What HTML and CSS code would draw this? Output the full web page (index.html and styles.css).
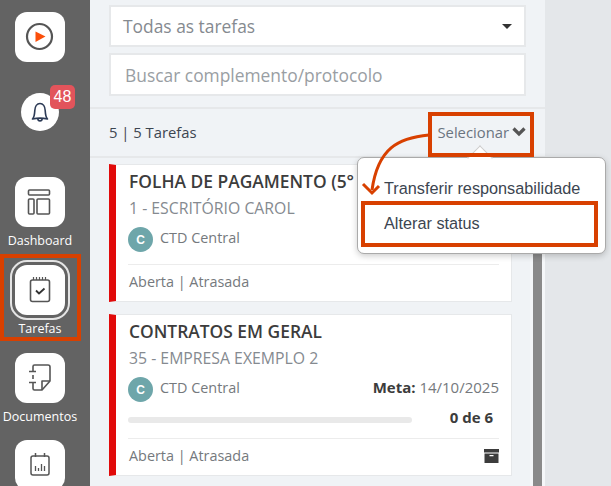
FILE: index.html
```html
<!DOCTYPE html>
<html lang="pt-BR">
<head>
  <meta charset="UTF-8" />
  <meta name="viewport" content="width=device-width, initial-scale=1.0"/>
  <title>Tarefas</title>
  <link rel="stylesheet" href="styles.css">
</head>
<body>

  <aside class="sidebar">
    <div class="tile tile-play">
      <svg width="42" height="42" viewBox="0 0 42 42" fill="none">
        <circle cx="20.5" cy="20.5" r="12.5" stroke="#555" stroke-width="2.2"/>
        <path d="M16.5 15.5 L26.5 20.5 L16.5 26 Z" fill="#fb4f0a"/>
      </svg>
    </div>

    <div class="bell">
      <svg width="24" height="24" viewBox="0 0 24 24" fill="none" stroke="#2c3a55" stroke-width="1.6" stroke-linejoin="round">
        <path d="M4.5 19 C6.5 17 6.6 14 6.8 10.5 C7 6.6 9 3.5 12 3.5 C15 3.5 17 6.6 17.2 10.5 C17.4 14 17.5 17 19.5 19 C15 18 9 18 4.5 19 Z"/>
        <path d="M9.8 18.6 C10 21.6 14 21.6 14.2 18.6"/>
      </svg>
      <span class="badge">48</span>
    </div>

    <div class="nav-item nav-dashboard">
      <div class="tile">
        <svg width="26" height="28" viewBox="0 0 26 28" fill="none" stroke="#555" stroke-width="1.6">
          <rect x="1.5" y="2" width="21" height="5" rx="1"/>
          <rect x="1.5" y="11" width="5.5" height="15" rx="1"/>
          <rect x="10" y="11" width="12.5" height="15" rx="1"/>
        </svg>
      </div>
      <span>Dashboard</span>
    </div>

    <div class="nav-item nav-active">
      <div class="ring">
        <div class="tile">
          <svg width="24" height="28" viewBox="0 0 24 28" fill="none" stroke="#555" stroke-width="1.6" stroke-linejoin="round">
            <rect x="2.5" y="4" width="19" height="21.5" rx="2"/>
            <path d="M5.5 1 V4 M8.5 1 V4 M11.5 1 V4 M14.5 1 V4 M17.5 1 V4" stroke-width="1.2"/>
            <path d="M8 14.5 L11 17.5 L16.5 12.5" stroke="#333" stroke-width="1.8"/>
          </svg>
        </div>
      </div>
      <span>Tarefas</span>
    </div>

    <div class="nav-item">
      <div class="tile">
        <svg width="26" height="30" viewBox="0 0 26 30" fill="none" stroke="#555" stroke-width="1.6" stroke-linejoin="round">
          <path d="M6 9 V3.5 Q6 2 7.5 2 H21 Q23 2 23 4 V18 L15 27 H7.5 Q6 27 6 25.5 V19"/>
          <path d="M2 8.5 H9 M2 19.5 H9 M6 12 V16"/>
          <path d="M23 18 H15 V27"/>
        </svg>
      </div>
      <span>Documentos</span>
    </div>

    <div class="nav-item">
      <div class="tile">
        <svg width="22" height="26" viewBox="0 0 22 26" fill="none" stroke="#555" stroke-width="1.5">
          <rect x="2" y="4" width="18" height="19" rx="2"/>
          <path d="M6.5 1 V5 M15.5 1 V5"/>
          <path d="M6.5 14 V19 M9.5 16 V19 M12.5 12 V19 M15.5 14 V19" stroke-width="1.3"/>
        </svg>
      </div>
    </div>
  </aside>

  <main class="content">
    <div class="filters">
      <div class="select">
        <span>Todas as tarefas</span>
        <i class="caret"></i>
      </div>
      <input class="search" type="text" placeholder="Buscar complemento/protocolo">
    </div>

    <div class="toolbar">
      <span>5 | 5 Tarefas</span>
      <span class="select-btn">Selecionar
        <svg width="14" height="10" viewBox="0 0 14 10" fill="none" stroke="#555" stroke-width="3.2"><path d="M1.5 1.5 L7 7 L12.5 1.5"/></svg>
      </span>
    </div>

    <div class="list">
      <article class="card">
        <h3>FOLHA DE PAGAMENTO (5°</h3>
        <p class="company">1 - ESCRITÓRIO CAROL</p>
        <div class="owner">
          <span class="avatar">C</span>
          <span>CTD Central</span>
        </div>
        <div class="card-foot">
          <span>Aberta | Atrasada</span>
        </div>
      </article>

      <article class="card">
        <h3>CONTRATOS EM GERAL</h3>
        <p class="company">35 - EMPRESA EXEMPLO 2</p>
        <div class="owner">
          <span class="avatar">C</span>
          <span>CTD Central</span>
          <span class="meta"><b>Meta:</b> 14/10/2025</span>
        </div>
        <div class="progress">
          <div class="bar"></div>
          <b>0 de 6</b>
        </div>
        <div class="card-foot">
          <span>Aberta | Atrasada</span>
          <svg width="15" height="14" viewBox="0 0 15 14" fill="#3c3c3c">
            <rect x="0" y="0" width="15" height="3.5"/>
            <path d="M0.5 4.5 H14.5 V14 H0.5 Z M5.5 6 V7.2 H9.5 V6 Z" fill-rule="evenodd"/>
          </svg>
        </div>
      </article>
    </div>

    <div class="scroll-track">
      <div class="scrollbar"></div>
    </div>
  </main>

  <div class="side-strip"></div>

  <div class="popover">
    <div class="popover-arrow"></div>
    <div class="popover-item">Transferir responsabilidade</div>
    <div class="popover-item popover-marked">Alterar status</div>
  </div>

  <!-- marcacoes do tutorial por cima da tela -->
  <div class="mark mark-tarefas"></div>
  <div class="mark mark-selecionar"></div>

  <svg class="arrow" width="80" height="70" viewBox="0 0 80 70" fill="none" stroke="#d84000" stroke-width="3">
    <path d="M71 7 C40 10 20 20 14 62"/>
    <path d="M5 56 L14 65 L21 58"/>
  </svg>

</body>
</html>
```

FILE: styles.css
```css
* { box-sizing: border-box; }

html, body {
  height: 486px;
}

body {
  margin: 0;
  display: flex;
  overflow: hidden;
  font-family: 'Open Sans', sans-serif;
  background: #e4e7ea;
  color: #3c3c3c;
}

.sidebar {
  width: 90px;
  flex: none;
  height: 486px;
  overflow: hidden;
  background: #636363;
  padding-top: 12px;
  display: flex;
  flex-direction: column;
  align-items: center;
  padding-right: 10px;
}

.tile {
  width: 50px;
  height: 50px;
  flex: none;
  background: white;
  border-radius: 12px;
  display: flex;
  justify-content: center;
  align-items: center;
}

.bell {
  position: relative;
  width: 38px;
  height: 38px;
  margin-top: 31px;
  margin-bottom: 46px;
  flex: none;
  border-radius: 50%;
  background: white;
  display: flex;
  justify-content: center;
  align-items: center;
}

.badge {
  position: absolute;
  top: -8px;
  left: 29px;
  width: 25px;
  height: 24px;
  border-radius: 5px;
  background: #e2545b;
  color: white;
  font-family: 'Liberation Sans', sans-serif;
  font-size: 16px;
  line-height: 24px;
  text-align: center;
}

.nav-item {
  display: flex;
  flex-direction: column;
  align-items: center;
  height: 88px;
  flex: none;
  color: white;
  font-size: 12.5px;
  line-height: 16px;
}

.nav-item span {
  margin-top: 6px;
}

.nav-active {
  margin-top: -5px;
  height: 93px;
}

.nav-active span {
  margin-top: 1px;
}

.nav-active + .nav-item {
  height: 87px;
}

.ring {
  width: 60px;
  height: 60px;
  border: 2px solid #e4e4e4;
  border-radius: 17px;
  display: flex;
  justify-content: center;
  align-items: center;
}

.content {
  position: relative;
  width: 455px;
  flex: none;
  height: 486px;
  overflow: hidden;
  background: #f0f3f6;
}

.filters {
  padding: 5px 19px 0;
  display: flex;
  flex-direction: column;
  gap: 6px;
  height: 109px;
  border-bottom: 2px solid #e6e8ea;
}

.select, .search {
  width: 417px;
  flex: none;
  background: white;
  border: 2px solid #e6e8ea;
  font-family: 'Open Sans', sans-serif;
  font-size: 17.4px;
  color: #858a90;
}

.select {
  height: 42px;
  padding: 0 12px;
  display: flex;
  justify-content: space-between;
  align-items: center;
}

.caret {
  border: 5px solid transparent;
  border-top-color: #333;
  border-bottom: none;
}

.search {
  height: 43px;
  padding: 0 14px;
  outline: none;
}

.search::placeholder {
  color: #999ea3;
  opacity: 1;
}

.toolbar {
  height: 49px;
  padding: 0 19px 2px;
  border-bottom: 2px solid #e6e8ea;
  display: flex;
  justify-content: space-between;
  align-items: center;
  font-size: 14.8px;
  color: #3c4550;
}

.select-btn {
  color: #6b7580;
  display: flex;
  align-items: center;
  gap: 3px;
}

.list {
  padding: 6px 0 0 19px;
  display: flex;
  flex-direction: column;
  gap: 12px;
}

.card {
  width: 403px;
  background: white;
  border: 1px solid #e6e8ea;
  border-left: 7px solid #e10a0a;
  padding: 5px 12px 0 12px;
}

.card h3 {
  margin: 0 0 0 1px;
  font-size: 17.4px;
  line-height: 22px;
  font-weight: 600;
  color: #3c3c3c;
  white-space: nowrap;
}

.company {
  margin: 6px 0 0 1px;
  font-size: 15.8px;
  line-height: 20px;
  color: #858a90;
}

.owner {
  display: flex;
  align-items: center;
  gap: 7px;
  margin-top: 6px;
  height: 26px;
  font-size: 14.4px;
  color: #75797d;
}

.owner .meta {
  margin-left: auto;
  font-size: 15px;
}

.meta b {
  color: #3c3c3c;
}

.avatar {
  width: 25px;
  height: 25px;
  border-radius: 50%;
  background: #6ea6aa;
  color: white;
  font-family: 'Liberation Sans', sans-serif;
  font-size: 12px;
  font-weight: bold;
  display: flex;
  justify-content: center;
  align-items: center;
  margin-top: 5px;
}

.progress {
  display: flex;
  align-items: center;
  justify-content: space-between;
  height: 38px;
  font-size: 15px;
}

.progress b {
  margin-right: 6px;
  margin-bottom: 4px;
}

.bar {
  width: 284px;
  height: 6px;
  border-radius: 3px;
  background: #e9e9e9;
  margin-top: 2px;
}

.card-foot {
  display: flex;
  justify-content: space-between;
  align-items: center;
  height: 37px;
  margin-top: 14px;
  padding: 0 0 3px 1px;
  border-top: 1px solid #ececec;
  font-size: 14.4px;
  color: #75797d;
}

.progress + .card-foot {
  margin-top: 0;
}

.scroll-track {
  position: absolute;
  left: 440px;
  top: 157px;
  width: 15px;
  height: 329px;
  background: #f5f7f9;
  padding-left: 3px;
}

.scrollbar {
  width: 9px;
  height: 329px;
  background: #8a8a8a;
}

.side-strip {
  flex: 1;
}

.mark {
  position: absolute;
  border: 4px solid #d84000;
}

.mark-tarefas {
  left: 0;
  top: 254px;
  width: 81px;
  height: 87px;
}

.mark-selecionar {
  left: 428px;
  top: 112px;
  width: 106px;
  height: 45px;
}

.popover {
  position: absolute;
  left: 357px;
  top: 157px;
  width: 249px;
  height: 97px;
  background: white;
  border: 1px solid #aaa;
  border-radius: 7px;
  box-shadow: 0 2px 6px rgba(0,0,0,0.2);
  padding-top: 18px;
  font-family: 'Liberation Sans', sans-serif;
  font-size: 16.25px;
  color: #3c4550;
}

.popover-arrow {
  position: absolute;
  left: 113px;
  top: -9px;
  width: 18px;
  height: 18px;
  background: white;
  border-left: 1px solid #ccc;
  border-top: 1px solid #ccc;
  transform: rotate(45deg);
}

.popover-item {
  position: relative;
  padding-left: 26px;
  height: 24px;
  line-height: 24px;
}

.popover-marked {
  margin: 1px 0 0 3px;
  padding-left: 19px;
  width: 237px;
  height: 46px;
  line-height: 36px;
  border: 4px solid #d84000;
}

.arrow {
  position: absolute;
  left: 358px;
  top: 128px;
}
```
